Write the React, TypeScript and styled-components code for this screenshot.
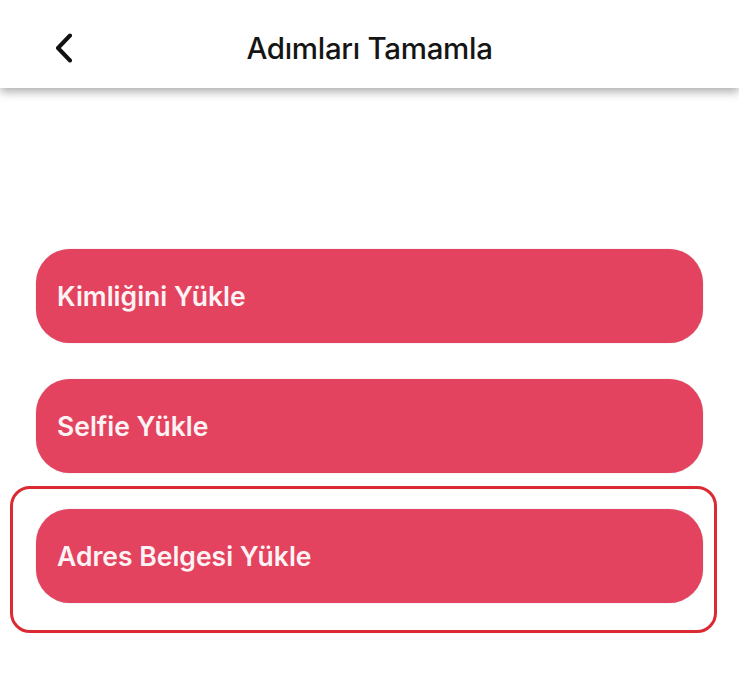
import React from "react";
import styled, { createGlobalStyle } from "styled-components";

const steps = [
  { id: "id", label: "Kimliğini Yükle" },
  { id: "selfie", label: "Selfie Yükle" },
  { id: "address", label: "Adres Belgesi Yükle", highlighted: true },
];

const GlobalStyle = createGlobalStyle`
  html, body {
    margin: 0;
    padding: 0;
    background: #ffffff;
  }

  body {
    font-family: Inter, "Noto Sans", "Liberation Sans", sans-serif;
    -webkit-font-smoothing: antialiased;
  }
`;

const Page = styled.div`
  width: 739px;
  min-height: 674px;
  background: #ffffff;
  overflow: hidden;
`;

const Header = styled.header`
  height: 88px;
  box-sizing: border-box;
  padding-top: 8px;
  display: grid;
  grid-template-columns: 110px 1fr 110px;
  align-items: center;
  background: #ffffff;
  box-shadow: 0 4px 9px rgba(0, 0, 0, 0.32);
  position: relative;
  z-index: 1;
`;

const BackButton = styled.button`
  justify-self: start;
  margin-left: 50px;
  width: 28px;
  height: 34px;
  padding: 0;
  border: none;
  background: none;
  display: flex;
  align-items: center;
  justify-content: center;
  cursor: pointer;
`;

const Title = styled.h1`
  margin: 0;
  text-align: center;
  font-size: 29.5px;
  font-weight: 500;
  letter-spacing: -0.3px;
  color: #151515;
`;

const StepList = styled.div`
  display: flex;
  flex-direction: column;
  gap: 36px;
  padding: 161px 36px 0 36px;
`;

// red outline drawn around the step that still needs attention
const Highlight = styled.div`
  border: 3px solid #dc2a33;
  border-radius: 20px;
  padding: 20px 11px 27px 23px;
  margin: -23px -14px -30px -26px;
`;

const StepButton = styled.button`
  width: 100%;
  height: 94px;
  border: none;
  border-radius: 34px;
  background: #e4435f;
  color: #fdf2f4;
  font-family: Inter, "Noto Sans", "Liberation Sans", sans-serif;
  font-size: 26.5px;
  font-weight: 600;
  text-align: left;
  padding: 0 0 0 21px;
  cursor: pointer;
  box-shadow: 0 0 1px rgba(120, 30, 50, 0.5);
`;

const ChevronLeft = () => (
  <svg width="20" height="30" viewBox="0 0 20 30" fill="none">
    <path
      d="M16 2.5 L4 15 L16 27.5"
      stroke="#111111"
      strokeWidth="4"
      strokeLinecap="round"
      strokeLinejoin="round"
    />
  </svg>
);

const App: React.FC = () => {
  return (
    <Page>
      <GlobalStyle />
      <Header>
        <BackButton aria-label="Geri">
          <ChevronLeft />
        </BackButton>
        <Title>Adımları Tamamla</Title>
        <span />
      </Header>

      <StepList>
        {steps.map((step) =>
          step.highlighted ? (
            <Highlight key={step.id}>
              <StepButton>{step.label}</StepButton>
            </Highlight>
          ) : (
            <StepButton key={step.id}>{step.label}</StepButton>
          )
        )}
      </StepList>
    </Page>
  );
};

export default App;
